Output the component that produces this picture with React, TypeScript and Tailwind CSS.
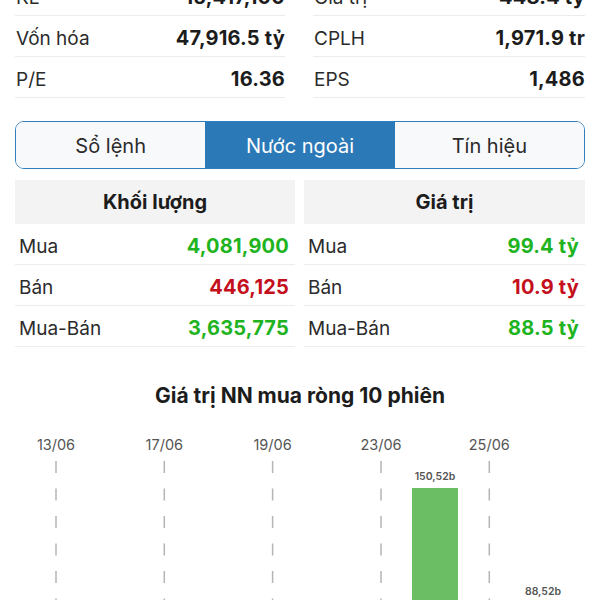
import React from "react";

const font = { fontFamily: "Inter, 'Noto Sans', sans-serif" };

type Row = { label: string; value: string };

const leftTop: Row[] = [
  { label: "KL", value: "15,417,100" },
  { label: "Vốn hóa", value: "47,916.5 tỷ" },
  { label: "P/E", value: "16.36" },
];
const rightTop: Row[] = [
  { label: "Giá trị", value: "448.4 tỷ" },
  { label: "CPLH", value: "1,971.9 tr" },
  { label: "EPS", value: "1,486" },
];

type TRow = { label: string; value: string; up: boolean };
const volRows: TRow[] = [
  { label: "Mua", value: "4,081,900", up: true },
  { label: "Bán", value: "446,125", up: false },
  { label: "Mua-Bán", value: "3,635,775", up: true },
];
const valRows: TRow[] = [
  { label: "Mua", value: "99.4 tỷ", up: true },
  { label: "Bán", value: "10.9 tỷ", up: false },
  { label: "Mua-Bán", value: "88.5 tỷ", up: true },
];

function TopCol({ rows }: { rows: Row[] }) {
  return (
    <div className="flex flex-col">
      {rows.map((r) => (
        <div
          key={r.label}
          className="flex h-[41px] items-center border-b border-[#ececec] pl-[1px] pt-[4px]"
        >
          <div className="flex w-full items-baseline justify-between">
            <span className="text-[19px] text-[#2b2b2b]">{r.label}</span>
            <span className="text-[20px] font-bold tracking-[0.2px] text-[#1c1c1c]">
              {r.value}
            </span>
          </div>
        </div>
      ))}
    </div>
  );
}

function TableCol({ title, rows }: { title: string; rows: TRow[] }) {
  return (
    <div className="flex flex-col">
      <div className="flex h-[44px] items-center justify-center bg-[#f3f3f3]">
        <span className="text-[20px] font-bold text-[#1c1c1c]">{title}</span>
      </div>
      {rows.map((r) => (
        <div
          key={r.label}
          className="flex h-[41px] items-center border-b border-[#ececec] pl-[4px] pr-[6px] pt-[4px]"
        >
          <div className="flex w-full items-baseline justify-between">
            <span className="text-[19px] text-[#2b2b2b]">{r.label}</span>
            <span
              className={
                r.up
                  ? "text-[20px] font-bold tracking-[0.2px] text-[#1fb41f]"
                  : "text-[20px] font-bold tracking-[0.2px] text-[#c4101c]"
              }
            >
              {r.value}
            </span>
          </div>
        </div>
      ))}
    </div>
  );
}

function Chart() {
  const dashX = [56, 164.3, 272.6, 381, 489.3];
  const labels = ["13/06", "17/06", "19/06", "23/06", "25/06"];
  return (
    <svg width="600" height="180" viewBox="0 0 600 180" className="block">
      {dashX.map((x, i) => (
        <g key={i}>
          <text
            x={x}
            y={29.5}
            textAnchor="middle"
            fontSize="14.5"
            fill="#555555"
            fontFamily="Inter, sans-serif"
          >
            {labels[i]}
          </text>
          <line
            x1={x}
            y1={41}
            x2={x}
            y2={180}
            stroke="#b5b5b5"
            strokeWidth="1.5"
            strokeDasharray="12 15.5"
          />
        </g>
      ))}
      <rect x={412} y={68} width={46} height={112} fill="#6cbe64" />
      <text
        x={435}
        y={60}
        textAnchor="middle"
        fontSize="10.5"
        fontWeight="600"
        fill="#555555"
        fontFamily="Inter, sans-serif"
      >
        150,52b
      </text>
      <text
        x={543}
        y={175}
        textAnchor="middle"
        fontSize="10.5"
        fontWeight="600"
        fill="#555555"
        fontFamily="Inter, sans-serif"
      >
        88,52b
      </text>
    </svg>
  );
}

export default function App() {
  return (
    <div className="h-[600px] w-[600px] overflow-hidden bg-white" style={font}>
      <div className="-mt-[25px] flex flex-col">
        <div className="grid grid-cols-[270px_272px] gap-x-[28px] px-[15px]">
          <TopCol rows={leftTop} />
          <TopCol rows={rightTop} />
        </div>

        <div className="mx-[15px] mt-[23px] grid h-[48px] grid-cols-3 overflow-hidden rounded-[9px] border-[1.5px] border-[#2f7fbf]">
          <div className="flex items-center justify-center bg-[#f8f9fb] pt-[2px] text-[20px] text-[#2b2b2b]">
            Sổ lệnh
          </div>
          <div className="flex items-center justify-center bg-[#2b79b7] pt-[2px] text-[20px] text-white">
            Nước ngoài
          </div>
          <div className="flex items-center justify-center bg-[#f8f9fb] pt-[2px] text-[20px] text-[#2b2b2b]">
            Tín hiệu
          </div>
        </div>

        <div className="mt-[11px] grid grid-cols-[280px_281px] gap-x-[9px] px-[15px]">
          <TableCol title="Khối lượng" rows={volRows} />
          <TableCol title="Giá trị" rows={valRows} />
        </div>

        <div className="mt-[33px] flex h-[30px] items-center justify-center pt-[2px]">
          <span className="text-[21px] font-bold text-[#1c1c1c]">
            Giá trị NN mua ròng 10 phiên
          </span>
        </div>

        <div className="mt-[10px]">
          <Chart />
        </div>
      </div>
    </div>
  );
}
